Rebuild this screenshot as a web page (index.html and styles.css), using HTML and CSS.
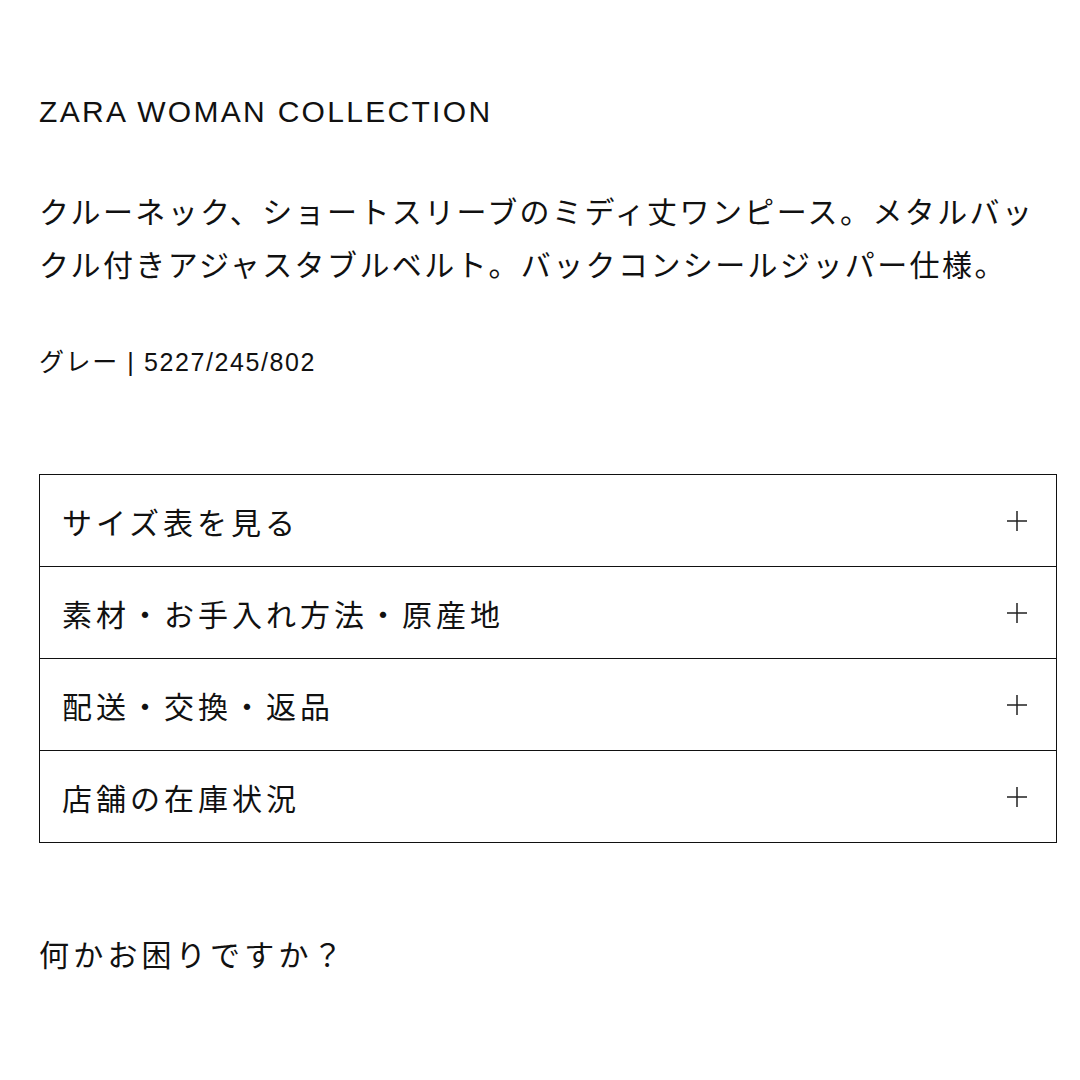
FILE: index.html
```html
<!DOCTYPE html>
<html lang="ja">
<head>
    <meta charset="UTF-8">
    <meta name="viewport" content="width=device-width, initial-scale=1.0">
    <title>ZARA WOMAN COLLECTION</title>
    <link rel="stylesheet" href="styles.css">
</head>
<body>
    <div class="product-info">
        <h1 class="collection">ZARA WOMAN COLLECTION</h1>
        <p class="description">クルーネック、ショートスリーブのミディ丈ワンピース。メタルバックル付きアジャスタブルベルト。バックコンシールジッパー仕様。</p>
        <p class="color-ref">グレー | 5227/245/802</p>

        <div class="accordion">
            <div class="accordion-row">
                <span>サイズ表を見る</span>
                <svg class="plus" width="22" height="22" viewBox="0 0 22 22"><path d="M11 1v20M1 11h20" stroke="#222" stroke-width="1.5" fill="none"/></svg>
            </div>
            <div class="accordion-row">
                <span>素材・お手入れ方法・原産地</span>
                <svg class="plus" width="22" height="22" viewBox="0 0 22 22"><path d="M11 1v20M1 11h20" stroke="#222" stroke-width="1.5" fill="none"/></svg>
            </div>
            <div class="accordion-row">
                <span>配送・交換・返品</span>
                <svg class="plus" width="22" height="22" viewBox="0 0 22 22"><path d="M11 1v20M1 11h20" stroke="#222" stroke-width="1.5" fill="none"/></svg>
            </div>
            <div class="accordion-row">
                <span>店舗の在庫状況</span>
                <svg class="plus" width="22" height="22" viewBox="0 0 22 22"><path d="M11 1v20M1 11h20" stroke="#222" stroke-width="1.5" fill="none"/></svg>
            </div>
        </div>

        <p class="help">何かお困りですか？</p>
    </div>
</body>
</html>
```

FILE: styles.css
```css
body {
    font-family: "Liberation Sans", "Noto Sans CJK JP", sans-serif;
    color: #111;
    background: #fff;
    margin: 0;
    padding: 0;
}
.product-info {
    width: 1018px;
    padding: 92px 0 0 39px;
}
.collection {
    font-size: 30px;
    font-weight: normal;
    letter-spacing: 2.3px;
    line-height: 40px;
    margin: 0;
}
.description {
    font-size: 30px;
    letter-spacing: 2.4px;
    line-height: 53px;
    margin: 54px 0 0;
}
.color-ref {
    font-size: 25px;
    letter-spacing: 1.6px;
    line-height: 30px;
    margin: 55px 0 0;
}
.accordion {
    margin-top: 97px;
    border: 1px solid #111;
}
.accordion-row {
    display: flex;
    align-items: center;
    justify-content: space-between;
    height: 91px;
    padding: 0 28px 0 22px;
    font-size: 30px;
    letter-spacing: 4px;
    border-top: 1px solid #111;
}
.accordion-row:first-child {
    border-top: none;
}
.help {
    font-size: 30px;
    letter-spacing: 4.2px;
    line-height: 40px;
    margin: 93px 0 0;
}
```
